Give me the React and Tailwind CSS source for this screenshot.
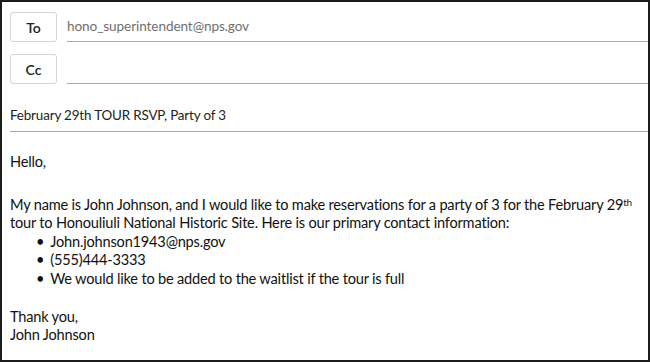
import React from 'react';

const font = { fontFamily: 'Lato, "Open Sans", sans-serif' };

function AddressRow({ label, value }) {
  return (
    <div className="flex items-end h-[30px]">
      <button
        type="button"
        className="w-[47px] h-[30px] shrink-0 rounded-[3px] border border-[#d4d4d4] bg-white text-[14px] font-semibold text-[#222]"
      >
        {label}
      </button>
      <div className="ml-[10px] flex-1 h-[30px] flex items-center border-b-[1.5px] border-[#aaaaaa] text-[13.6px] tracking-[-0.1px] text-[#707070]">
        {value}
      </div>
    </div>
  );
}

export default function App() {
  return (
    <div
      className="w-[650px] h-[362px] border-2 border-[#1c1c1c] bg-white text-[#111] overflow-hidden"
      style={font}
    >
      <div className="pl-[8px] pt-[10px] flex flex-col gap-[12px]">
        <AddressRow label="To" value="hono_superintendent@nps.gov" />
        <AddressRow label="Cc" value="" />
        <div className="mt-[3px] h-[33px] flex items-center border-b-[1.5px] border-[#aaaaaa] text-[13.4px] tracking-[-0.15px] text-[#222]">
          February 29th TOUR RSVP, Party of 3
        </div>
      </div>

      <div className="px-[8px] pt-[21px] text-[14.6px] tracking-[-0.2px] leading-[18.6px]">
        <p>Hello,</p>
        <p className="mt-[24px]">
          My name is John Johnson, and I would like to make reservations for a party of 3 for the February 29
          <sup className="relative -top-[4px] text-[10px] leading-none">th</sup>
          <br />
          tour to Honouliuli National Historic Site. Here is our primary contact information:
        </p>
        <ul className="pl-[26px]">
          <li className="flex gap-[6px]"><span>•</span><span>John.johnson1943@nps.gov</span></li>
          <li className="flex gap-[6px]"><span>•</span><span>(555)444-3333</span></li>
          <li className="flex gap-[6px]"><span>•</span><span>We would like to be added to the waitlist if the tour is full</span></li>
        </ul>
        <p className="mt-[19px]">Thank you,</p>
        <p>John Johnson</p>
      </div>
    </div>
  );
}
